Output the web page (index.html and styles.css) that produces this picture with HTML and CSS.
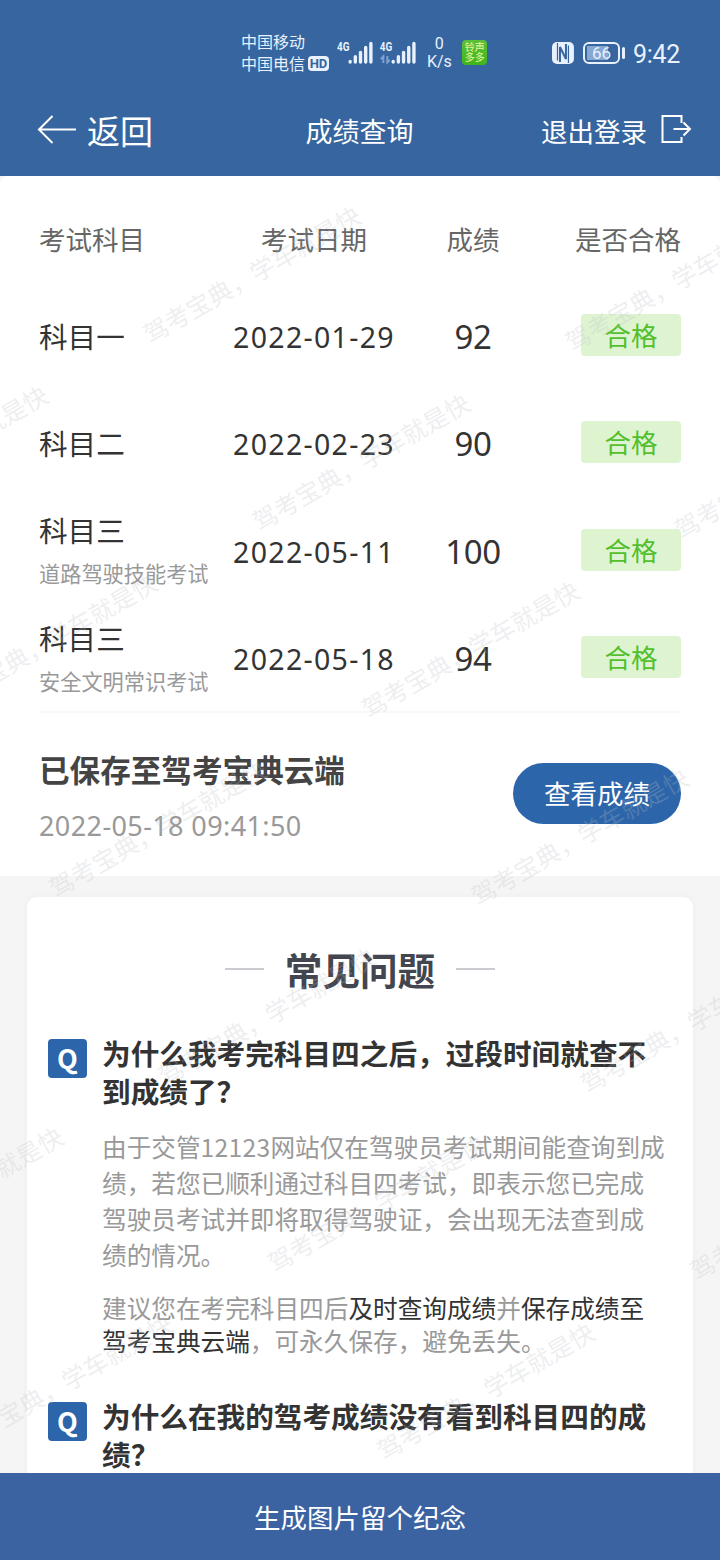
FILE: index.html
```
<!DOCTYPE html>
<html lang="zh-CN">
<head>
  <meta charset="UTF-8" />
  <meta name="viewport" content="width=device-width, initial-scale=1.0"/>
  <title>成绩查询</title>
  <link rel="stylesheet" href="styles.css">
</head>
<body>

  <header>
    <div class="status">
      <div class="carrier">
        <div>中国移动</div>
        <div>中国电信<span class="hd">HD</span></div>
      </div>
      <svg class="signal" width="80" height="28" viewBox="0 0 80 28">
        <g class="net">
          <text x="0" y="13" textLength="12.500" lengthAdjust="spacingAndGlyphs">4G</text>
          <text x="43" y="13" textLength="12.500" lengthAdjust="spacingAndGlyphs">4G</text>
        </g>
        <path class="bars" d="M13.200 23.500v.5M18.400 18.800v5.200M23.600 14.500v9.500M28.800 9.500v14.500M34 5.500v18.500M56.400 23.500v.5M61.600 18.800v5.200M66.800 14.500v9.500M72 9.500v14.500M77.200 5.500v18.500"/>
        <path class="updown" d="M46.500 25v-6.500l-2.500 2.500M50.500 18v6.500l2.500-2.500"/>
      </svg>
      <div class="speed">
        <div>0</div>
        <div>K/s</div>
      </div>
      <div class="app-icon">铃声<br>多多</div>
      <svg class="nfc" width="22" height="22" viewBox="0 0 22 22">
        <rect width="22" height="22" rx="5"/>
        <path d="M5.500 1v17.500M16.500 3.500V21"/>
        <path class="slash" d="M8 20V5l6 12V2"/>
      </svg>
      <div class="battery"><span>66</span></div>
      <div class="clock">9:42</div>
    </div>

    <nav>
      <a class="back" href="#">
        <svg width="40" height="30" viewBox="0 0 40 30"><path d="M39 14.500H2M15.500 1L2 14.500l13.500 13.500"/></svg>
        返回
      </a>
      <h1>成绩查询</h1>
      <a class="logout" href="#">
        退出登录
        <svg width="32" height="32" viewBox="0 0 32 32"><path d="M21.500 9V2H2.500v26h19v-5M13.500 15h16M23.500 8.500l6.500 6.500-6.500 6.500"/></svg>
      </a>
    </nav>
  </header>

  <main>
    <div class="result">
      <div class="row head">
        <span>考试科目</span><span>考试日期</span><span>成绩</span><span>是否合格</span>
      </div>
      <div class="row">
        <div class="subject">科目一</div>
        <div class="date">2022-01-29</div>
        <div class="score">92</div>
        <div class="tag">合格</div>
      </div>
      <div class="row">
        <div class="subject">科目二</div>
        <div class="date">2022-02-23</div>
        <div class="score">90</div>
        <div class="tag">合格</div>
      </div>
      <div class="row">
        <div class="subject">科目三<small>道路驾驶技能考试</small></div>
        <div class="date">2022-05-11</div>
        <div class="score">100</div>
        <div class="tag">合格</div>
      </div>
      <div class="row">
        <div class="subject">科目三<small>安全文明常识考试</small></div>
        <div class="date">2022-05-18</div>
        <div class="score">94</div>
        <div class="tag">合格</div>
      </div>

      <div class="saved">
        <div>
          <h3>已保存至驾考宝典云端</h3>
          <p>2022-05-18 09:41:50</p>
        </div>
        <button>查看成绩</button>
      </div>
    </div>

    <div class="faq">
      <h2>常见问题</h2>
      <div class="item">
        <span class="q">Q</span>
        <div>
          <h4>为什么我考完科目四之后，过段时间就查不到成绩了？</h4>
          <p>由于交管<i>12123</i>网站仅在驾驶员考试期间能查询到成绩，若您已顺利通过科目四考试，即表示您已完成驾驶员考试并即将取得驾驶证，会出现无法查到成绩的情况。</p>
          <p class="tip">建议您在考完科目四后<b>及时查询成绩</b>并<b>保存成绩至驾考宝典云端</b>，可永久保存，避免丢失。</p>
        </div>
      </div>
      <div class="item">
        <span class="q">Q</span>
        <div>
          <h4>为什么在我的驾考成绩没有看到科目四的成绩？</h4>
        </div>
      </div>
    </div>

    <svg class="watermark" width="720" height="1297" viewBox="0 176 720 1297"></svg>
  </main>

  <footer>生成图片留个纪念</footer>

  <script>
    // 斜向平铺水印
    const mark = document.querySelector('.watermark');
    for (let r = 0; r < 7; r++) {
      for (let c = -2; c < 2; c++) {
        const x = 155 + 422 * c + 109.3 * r;
        const y = 331 + 8 * c + 187.4 * r;
        // 画面外的不画
        if (x < -230 || x > 730) continue;
        const t = document.createElementNS('http://www.w3.org/2000/svg', 'text');
        t.setAttribute('transform', `translate(${x} ${y}) rotate(-30)`);
        t.setAttribute('x', -11);
        t.setAttribute('y', 9);
        t.textContent = '驾考宝典，学车就是快';
        mark.appendChild(t);
      }
    }
  </script>

</body>
</html>
```

FILE: styles.css
```
* {
  box-sizing: border-box;
}

body {
  margin: 0;
  height: 1560px;
  display: flex;
  flex-direction: column;
  overflow: hidden;
  font-family: 'Noto Sans CJK SC', sans-serif;
  background: #f5f5f5;
  color: #333;
}

h1, h2, h3, h4, p {
  margin: 0;
}

header {
  height: 176px;
  flex: none;
  background: #36659f;
  color: #fff;
}

/* 状态栏 */
.status {
  height: 88px;
  padding: 30px 40px 0 241px;
  display: flex;
  align-items: flex-start;
  color: #e8f1fd;
}

.carrier {
  width: 96px;
  font-size: 16px;
  line-height: 22px;
}

.carrier div {
  display: flex;
  align-items: center;
}

.hd {
  margin-left: 3px;
  width: 21px;
  height: 15px;
  border-radius: 4px;
  background: #e8f1fd;
  color: #36659f;
  font: bold 13px/15px Roboto, sans-serif;
  text-align: center;
}

.signal {
  margin-top: 8px;
}

.net {
  font: bold 13px Roboto, sans-serif;
  fill: #e8f1fd;
}

.bars {
  stroke: #e8f1fd;
  stroke-width: 3.4;
  stroke-linecap: round;
}

.updown {
  fill: none;
  stroke: #7fa2d2;
  stroke-width: 2;
}

.speed {
  width: 26px;
  margin: 5px 0 0 10px;
  font: 16px/18px Roboto, sans-serif;
  text-align: center;
}

.app-icon {
  width: 25px;
  height: 25px;
  margin: 10px 0 0 10px;
  padding-top: 2px;
  border-radius: 4px;
  background: linear-gradient(#5cbf3a, #3fb51c);
  color: #e9f7a0;
  font-size: 10px;
  line-height: 10px;
  text-align: center;
}

.nfc {
  margin: 12px 0 0 65px;
}

.nfc rect {
  fill: #e8f1fd;
}

.nfc path {
  fill: none;
  stroke: #36659f;
  stroke-width: 1.2;
}

.nfc .slash {
  stroke-width: 2;
}

.battery {
  position: relative;
  width: 37px;
  height: 22px;
  margin: 12px 0 0 9px;
  border: 2px solid #e8f1fd;
  border-radius: 6px;
  background: linear-gradient(#86a8d3, #86a8d3) 2px 2px / 21px 14px no-repeat;
  font: 17px/19px Roboto, sans-serif;
  text-align: center;
}

.battery::after {
  content: '';
  position: absolute;
  right: -7px;
  top: 3px;
  width: 3px;
  height: 12px;
  border-radius: 2px;
  background: #e8f1fd;
}

.clock {
  margin: 10px 0 0 13px;
  font: 25px/30px Roboto, sans-serif;
  letter-spacing: -0.3px;
}

nav {
  height: 88px;
  padding: 0 28px 4px 37px;
  display: grid;
  grid-template-columns: 1fr 108px 1fr;
  column-gap: 10px;
  align-items: center;
}

nav a {
  display: flex;
  align-items: center;
  color: #fff;
  text-decoration: none;
  white-space: nowrap;
}

nav svg {
  flex: none;
  fill: none;
  stroke: #fff;
  stroke-width: 2;
}

nav h1 {
  margin-left: -5px;
  font-size: 27px;
  font-weight: normal;
  white-space: nowrap;
}

.back {
  gap: 10px;
  font-size: 33px;
}

.logout {
  justify-content: flex-end;
  gap: 13px;
  font-size: 26.5px;
}

main {
  position: relative;
  flex: 1;
  min-height: 0;
  overflow: hidden;
}

/* 成绩列表 */
.result {
  height: 700px;
  padding: 20px 39px 0;
  border-radius: 8px 8px 0 0;
  background: #fff;
}

.row {
  height: 107.3px;
  padding-top: 3px;
  display: grid;
  grid-template-columns: 190px 170px 148px 1fr;
  align-items: center;
}

.row > * + * {
  text-align: center;
}

.row.head {
  height: 86px;
  padding: 0 0 2px;
  font-size: 26.5px;
  color: #666;
}

.row > :last-child {
  justify-self: end;
}

.subject {
  margin-top: -4px;
  font-size: 28.6px;
  line-height: 43px;
}

.subject small {
  display: block;
  margin-bottom: -3px;
  font-size: 21.2px;
  line-height: 43px;
  color: #999;
}

.date {
  font: 28.5px/40px 'Noto Sans', sans-serif;
  letter-spacing: 1.3px;
  white-space: nowrap;
}

.score {
  font: 33px/40px 'Noto Sans', sans-serif;
  letter-spacing: -0.4px;
}

.tag {
  width: 100px;
  height: 42px;
  margin-top: -4px;
  border-radius: 4px;
  background: #def4d1;
  color: #53bf2c;
  font-size: 26.5px;
  line-height: 42px;
}

.saved {
  border-top: 2px solid #f8f8f8;
  padding-top: 30px;
  display: flex;
  justify-content: space-between;
  align-items: flex-start;
}

.saved h3 {
  font-size: 30.6px;
  line-height: 52px;
  color: #444;
}

.saved p {
  font: 27px/61px 'Noto Sans', sans-serif;
  letter-spacing: 0.4px;
  color: #999;
}

button {
  width: 168px;
  height: 61px;
  margin-top: 20px;
  padding: 0 0 2px;
  border: none;
  border-radius: 31px;
  background: #2c65aa;
  color: #fff;
  font: 26.5px 'Noto Sans CJK SC', sans-serif;
}

/* 常见问题 */
.faq {
  height: 700px;
  margin: 21px 27px 0;
  padding: 44px 21px 0;
  border-radius: 10px;
  background: #fff;
  box-shadow: 0 0 8px rgba(0,0,0,0.03);
}

.faq h2 {
  display: flex;
  justify-content: center;
  align-items: center;
  gap: 21px;
  font-size: 37.6px;
  line-height: 56px;
  color: #43464f;
}

.faq h2::before,
.faq h2::after {
  content: '';
  width: 39px;
  height: 2px;
  background: #cbccd1;
}

.item {
  margin-top: 37px;
  display: flex;
  gap: 15px;
}

.item + .item {
  margin-top: 40px;
}

.item > div {
  width: 566px;
}

.q {
  flex: none;
  width: 39px;
  height: 39px;
  margin-top: 5px;
  border-radius: 4px;
  background: #2c65aa;
  color: #fff;
  font: bold 27px/37px 'Noto Sans CJK SC', sans-serif;
  text-align: center;
}

.item h4 {
  font-size: 28.65px;
  line-height: 38px;
}

.item p {
  margin-top: 18px;
  font-size: 24.65px;
  line-height: 36px;
  color: #999;
}

.item i {
  font-style: normal;
  letter-spacing: 0.3px;
}

.item .tip {
  margin-top: 19px;
  line-height: 33px;
}

.item b {
  font-weight: normal;
  color: #333;
}

.watermark {
  position: absolute;
  left: 0;
  top: 0;
  pointer-events: none;
  font-size: 24.6px;
  fill: rgba(185,189,196,0.25);
}

footer {
  flex: none;
  height: 87px;
  background: #3b62a1;
  color: #fff;
  font-size: 26.5px;
  line-height: 87px;
  text-align: center;
}
```
